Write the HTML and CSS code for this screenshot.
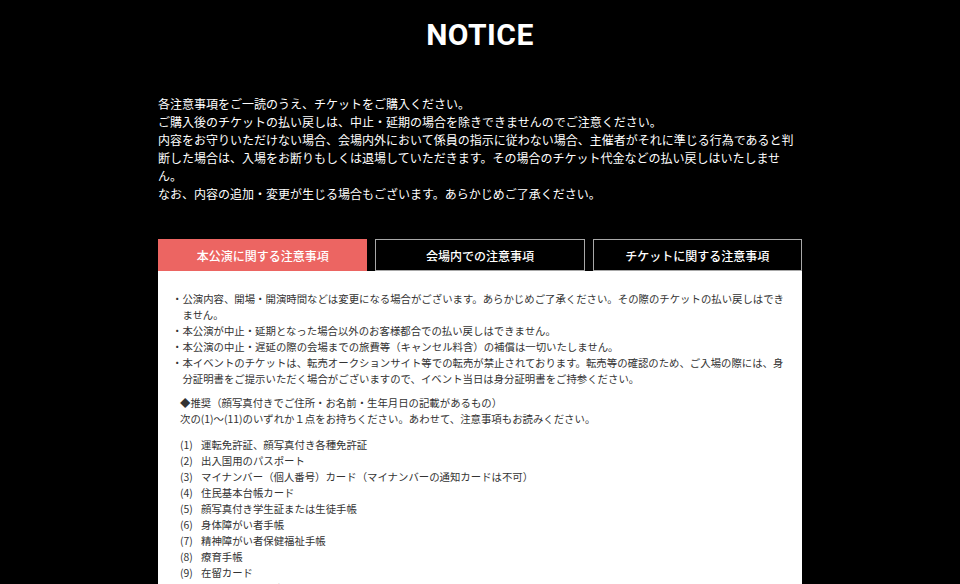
FILE: index.html
```html
<!DOCTYPE html>
<html lang="ja">
<head>
<meta charset="utf-8">
<title>NOTICE</title>
<link rel="stylesheet" href="styles.css">
</head>
<body>
<div class="page">
  <h1 class="title">NOTICE</h1>
  <div class="intro">
    <p>各注意事項をご一読のうえ、チケットをご購入ください。</p>
    <p>ご購入後のチケットの払い戻しは、中止・延期の場合を除きできませんのでご注意ください。</p>
    <p>内容をお守りいただけない場合、会場内外において係員の指示に従わない場合、主催者がそれに準じる行為であると判断した場合は、入場をお断りもしくは退場していただきます。その場合のチケット代金などの払い戻しはいたしません。</p>
    <p>なお、内容の追加・変更が生じる場合もございます。あらかじめご了承ください。</p>
  </div>
  <div class="tabs">
    <div class="tab active">本公演に関する注意事項</div>
    <div class="tab">会場内での注意事項</div>
    <div class="tab">チケットに関する注意事項</div>
  </div>
  <div class="panel">
    <ul class="bullets">
      <li>・公演内容、開場・開演時間などは変更になる場合がございます。あらかじめご了承ください。その際のチケットの払い戻しはできません。</li>
      <li>・本公演が中止・延期となった場合以外のお客様都合での払い戻しはできません。</li>
      <li>・本公演の中止・遅延の際の会場までの旅費等（キャンセル料含）の補償は一切いたしません。</li>
      <li>・本イベントのチケットは、転売オークションサイト等での転売が禁止されております。転売等の確認のため、ご入場の際には、身分証明書をご提示いただく場合がございますので、イベント当日は身分証明書をご持参ください。</li>
    </ul>
    <div class="sub">
      <p>◆推奨（顔写真付きでご住所・お名前・生年月日の記載があるもの）</p>
      <p>次の(1)〜(11)のいずれか１点をお持ちください。あわせて、注意事項もお読みください。</p>
      <ol class="ids">
        <li><span class="num">(1)</span><span>運転免許証、顔写真付き各種免許証</span></li>
        <li><span class="num">(2)</span><span>出入国用のパスポート</span></li>
        <li><span class="num">(3)</span><span>マイナンバー（個人番号）カード（マイナンバーの通知カードは不可）</span></li>
        <li><span class="num">(4)</span><span>住民基本台帳カード</span></li>
        <li><span class="num">(5)</span><span>顔写真付き学生証または生徒手帳</span></li>
        <li><span class="num">(6)</span><span>身体障がい者手帳</span></li>
        <li><span class="num">(7)</span><span>精神障がい者保健福祉手帳</span></li>
        <li><span class="num">(8)</span><span>療育手帳</span></li>
        <li><span class="num">(9)</span><span>在留カード</span></li>
        <li><span class="num">(10)</span><span>特別永住者証明書</span></li>
        <li><span class="num">(11)</span><span>外国人登録証明書</span></li>
      </ol>
    </div>
  </div>
</div>
</body>
</html>
```
FILE: styles.css
```css
html, body {
  margin: 0;
  padding: 0;
  background: #000;
}
body {
  font-family: "Noto Sans CJK JP", "Noto Sans", sans-serif;
  color: #fff;
}
.page {
  width: 644px;
  margin: 0 auto;
  padding-top: 20px;
}
.title {
  margin: 0;
  font-family: Roboto, "Liberation Sans", sans-serif;
  font-weight: 700;
  font-size: 30px;
  line-height: 30px;
  letter-spacing: 0.5px;
  text-align: center;
  color: #fff;
}
.intro {
  margin-top: 45px;
  font-size: 12px;
  line-height: 18px;
}
.intro p {
  margin: 0;
}
.tabs {
  margin-top: 36px;
  display: flex;
  gap: 8px;
}
.tab {
  flex: 1;
  box-sizing: border-box;
  height: 32px;
  display: flex;
  align-items: center;
  justify-content: center;
  font-size: 12px;
  font-weight: 500;
  color: #fff;
  background: #000;
  border: 1px solid #a8a8a8;
}
.tab.active {
  background: #ec6562;
  border-color: #ec6562;
}
.panel {
  background: #fff;
  color: #333;
  padding: 20px 14px 30px;
  font-size: 10.4px;
  line-height: 16px;
}
.bullets {
  list-style: none;
  margin: 0;
  padding: 0;
}
.bullets li {
  padding-left: 1em;
  text-indent: -1em;
}
.sub {
  margin-top: 8px;
  padding-left: 8px;
}
.sub p {
  margin: 0;
}
.ids {
  list-style: none;
  margin: 10px 0 0;
  padding: 0;
}
.ids li {
  display: flex;
}
.num {
  width: 21px;
  flex: none;
}
```
